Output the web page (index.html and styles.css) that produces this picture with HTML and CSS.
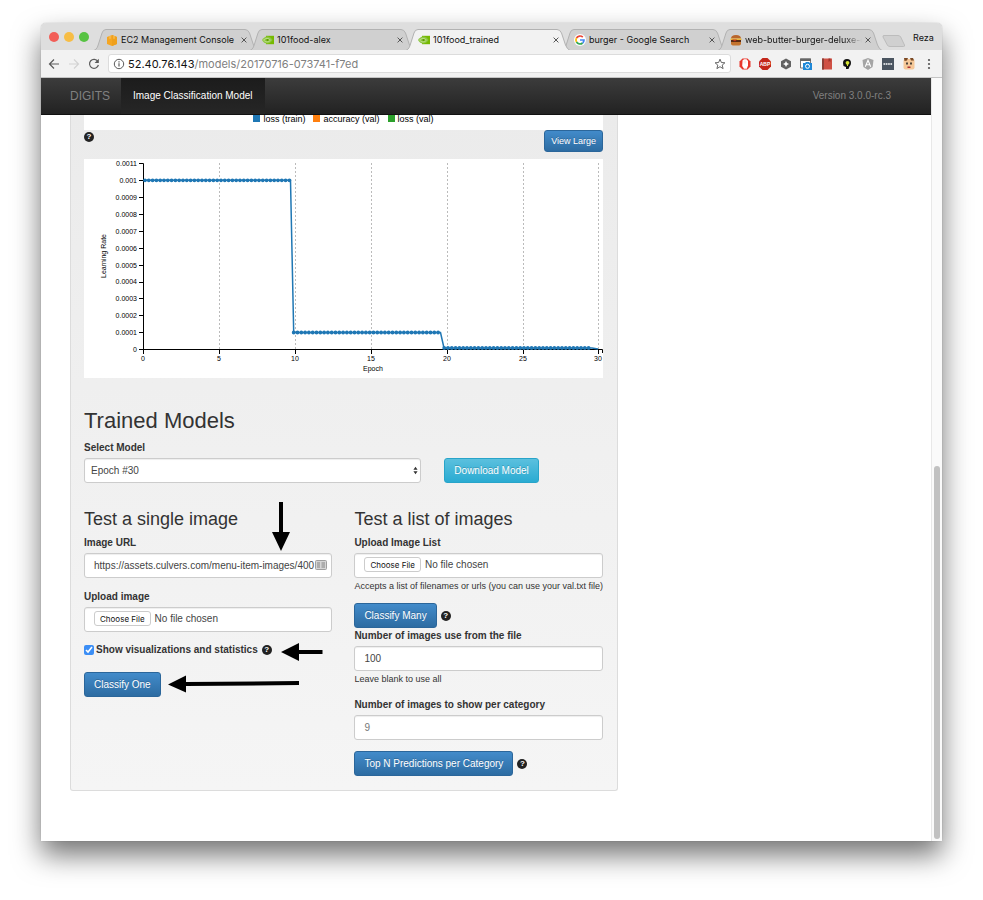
FILE: index.html
```html
<!DOCTYPE html>
<html lang="en">
<head>
<meta charset="utf-8">
<title>101food_trained</title>
<link rel="stylesheet" href="styles.css">
</head>
<body>
<svg class="defs" aria-hidden="true">
  <symbol id="tab-shape" viewBox="0 0 164 21" preserveAspectRatio="none">
    <path d="M0 21.500C3 20 3.500 18 4.500 15L8 4Q9 .5 12 .5H151Q154 .5 155.500 4L159.500 16Q161 20 164 21.500"/>
  </symbol>
  <symbol id="close" viewBox="0 0 6 6"><path d="M.6.6l4.800 4.800M5.400.6L.6 5.400" fill="none" stroke="#555" stroke-width="1"/></symbol>
  <symbol id="nvidia" viewBox="0 0 12 10">
    <path d="M4 .8H12V9.200H4z" fill="#76b900"/>
    <path d="M0 5Q2.500 1 6 1.500Q9.500 2.200 10.500 5Q8.500 8.500 5 8.500Q2 8.500 0 5z" fill="#8cc63f"/>
    <path d="M1.500 5Q4 2.600 6.500 3.600Q8 4.500 8.500 5.200Q7 7 5 7Q3 6.800 1.500 5z" fill="none" stroke="#cfe6a0" stroke-width=".7"/>
    <circle cx="5.500" cy="5" r="1.100" fill="#5d9800"/>
  </symbol>
</svg>
<div class="window">
  <header class="tabstrip">
    <div class="lights"><i class="red"></i><i class="yellow"></i><i class="green"></i></div>
    <nav class="tabs">
      <div class="tab">
        <svg class="shape"><use href="#tab-shape"/></svg>
        <svg class="fav" viewBox="0 0 12 12"><path d="M1 3L6 1l5 2v7L6 12 1 10z" fill="#f5a623"/><path d="M6 1l5 2v7L6 12z" fill="#efa01c"/><path d="M4 1.800v3M8 1.800v3" stroke="#fbc767" stroke-width="1"/></svg>
        <span class="title">EC2 Management Console</span>
        <button class="close" aria-label="Close tab"><svg><use href="#close"/></svg></button>
      </div>
      <div class="tab">
        <svg class="shape"><use href="#tab-shape"/></svg>
        <svg class="fav"><use href="#nvidia"/></svg>
        <span class="title">101food-alex</span>
        <button class="close" aria-label="Close tab"><svg><use href="#close"/></svg></button>
      </div>
      <div class="tab current">
        <svg class="shape"><use href="#tab-shape"/></svg>
        <svg class="fav"><use href="#nvidia"/></svg>
        <span class="title">101food_trained</span>
        <button class="close" aria-label="Close tab"><svg><use href="#close"/></svg></button>
      </div>
      <div class="tab">
        <svg class="shape"><use href="#tab-shape"/></svg>
        <svg class="fav" viewBox="0 0 12 12"><circle cx="6" cy="6" r="6" fill="#fff"/><g fill="none" stroke-width="1.700"><path d="M8.800 3.200A4 4 0 0 0 2.500 4" stroke="#ea4335"/><path d="M2.500 4A4 4 0 0 0 2.500 8" stroke="#fbbc05"/><path d="M2.500 8A4 4 0 0 0 8.600 9" stroke="#34a853"/><path d="M8.600 9A4 4 0 0 0 10 6H6" stroke="#4285f4"/></g></svg>
        <span class="title">burger - Google Search</span>
        <button class="close" aria-label="Close tab"><svg><use href="#close"/></svg></button>
      </div>
      <div class="tab">
        <svg class="shape"><use href="#tab-shape"/></svg>
        <svg class="fav" viewBox="0 0 12 12"><path d="M1 4.500Q1 1 6 1t5 3.500z" fill="#b9652b"/><path d="M.5 4.500h11v1.500H.5z" fill="#e9b93c"/><path d="M1 6h10v2H1z" fill="#5b2c14"/><path d="M1 8h10v1.500Q11 11.500 8 11.500H4Q1 11.500 1 9.500z" fill="#c4742f"/><path d="M2 5.500l3 2 2-2z" fill="#c5351f"/></svg>
        <span class="title fade">web-butter-burger-deluxe-c</span>
        <button class="close" aria-label="Close tab"><svg><use href="#close"/></svg></button>
      </div>
    </nav>
    <button class="newtab" aria-label="New tab"><svg viewBox="0 0 24 14"><path d="M2 1.500H16Q18 1.500 18.700 3L22.500 11Q23 12.500 21.500 12.500H8Q6 12.500 5.300 11L1 3Q.5 1.500 2 1.500z" fill="#d0d0d0" stroke="#b5b5b5" stroke-width=".8"/></svg></button>
    <span class="profile">Reza</span>
  </header>

  <div class="toolbar">
    <button class="tool" aria-label="Back"><svg viewBox="0 0 12 12"><path d="M11 6H1.800M6 1.500L1.500 6 6 10.500" fill="none" stroke="#5a5a5a" stroke-width="1.200"/></svg></button>
    <button class="tool" aria-label="Forward"><svg viewBox="0 0 12 12"><path d="M1 6h9.200M6 1.500L10.500 6 6 10.500" fill="none" stroke="#d2d2d2" stroke-width="1.200"/></svg></button>
    <button class="tool" aria-label="Reload"><svg viewBox="0 0 12 12"><path d="M9.800 3.300A4.500 4.500 0 1 0 10.400 7" fill="none" stroke="#5a5a5a" stroke-width="1.200"/><path d="M10.800.8v4.200H6.600z" fill="#5a5a5a"/></svg></button>
    <div class="omnibox">
      <svg viewBox="0 0 12 12"><circle cx="6" cy="6" r="4.700" fill="none" stroke="#5a5a5a"/><path d="M6 5.200v3.400M6 3.200v1.200" stroke="#5a5a5a" stroke-width="1.200"/></svg>
      <label for="address">52.40.76.143</label><input id="address" type="text" value="/models/20170716-073741-f7ed">
      <svg viewBox="0 0 12 12"><path d="M6 1.200l1.400 3.300 3.500.3-2.700 2.300.9 3.500L6 8.700l-3.100 1.900.9-3.500L1.100 4.800l3.500-.3z" fill="none" stroke="#555" stroke-width=".9"/></svg>
    </div>
    <div class="extensions">
      <svg viewBox="0 0 12 12"><path d="M3.500.5h5L11.500 3.500v5L8.500 11.500h-5L.5 8.500v-5z" fill="#e8372c"/><path d="M3.500 2.500L5 1.200h2.500L9 3v4.500L7.800 10.800H5L3.200 8z" fill="#fff"/><path d="M5.200 2.500v3M6.700 2.500v3" stroke="#f3b5b0" stroke-width=".4"/></svg>
      <svg viewBox="0 0 12 12"><path d="M3.500 0h5L12 3.500v5L8.500 12h-5L0 8.500v-5z" fill="#c3271b"/><text x="6" y="7.800" class="badge">ABP</text></svg>
      <svg viewBox="0 0 12 12"><path d="M6 .5l5 2.700v5.600L6 11.500 1 8.800V3.200z" fill="#626262"/><path d="M6 3l1 2 2 1-2 1-1 2-1-2-2-1 2-1z" fill="#fff"/></svg>
      <svg viewBox="0 0 12 12"><path d="M.5 1h10v9h-10z" fill="#fff" stroke="#777"/><path d="M0 .5h11V3H0z" fill="#666"/><path d="M3 5h2l1-1h3l1 1h2v7H3z" fill="#1e88d8"/><circle cx="7.500" cy="8.300" r="2" fill="none" stroke="#fff"/></svg>
      <svg viewBox="0 0 12 12"><path d="M1 .5h10v11H1z" fill="#cf5145"/><path d="M1 .5h2v11H1z" fill="#8d4038"/><path d="M7.500.5h2V4l-1-1-1 1z" fill="#a1352c"/></svg>
      <svg viewBox="0 0 12 12"><path d="M2 5a4 4 0 0 1 8 0q0 2-1.500 3.500L7.500 11H5V9L2.500 8z" fill="#111"/><circle cx="6.500" cy="4.800" r="1.900" fill="#d7e635"/><path d="M6 6h1v2H6z" fill="#d7e635"/></svg>
      <svg viewBox="0 0 12 12"><path d="M6 0l5.500 2-.9 7L6 12 1.400 9 .5 2z" fill="#a5a5a5"/><path d="M3.300 8.800L6 2.300l2.700 6.500M4.300 6.800h3.400" fill="none" stroke="#fff" stroke-width="1.100"/></svg>
      <svg viewBox="0 0 12 12"><path d="M0 0h12v12H0z" fill="#4b5560"/><path d="M1.500 6h9" stroke="#fff" stroke-width="1.500" stroke-dasharray="1.700 .6"/></svg>
      <svg viewBox="0 0 12 12"><rect x=".5" y="1" width="11" height="10.500" rx="2" fill="#f5c898"/><path d="M1 0h4L4 2.500 1.500 3zM7 0h3l1 2.500H8z" fill="#7b4a25"/><path d="M3.200 4.500h1.600v2H3.200zM7.200 4.500h1.600v2H7.200z" fill="#222"/><path d="M4.500 8.500h3v1.500h-3z" fill="#a33"/></svg>
      <svg viewBox="0 0 12 12"><g fill="#555"><circle cx="6" cy="2" r="1.100"/><circle cx="6" cy="6" r="1.100"/><circle cx="6" cy="10" r="1.100"/></g></svg>
    </div>
  </div>

  <div class="viewport">
    <div class="page">
      <nav class="navbar">
        <a class="brand" href="#">DIGITS</a>
        <a class="active" href="#">Image Classification Model</a>
        <span class="version">Version 3.0.0-rc.3</span>
      </nav>
      <main class="content">
        <section class="well">
          <div class="legend">
            <span class="blue">loss (train)</span><span class="orange">accuracy (val)</span><span class="leaf">loss (val)</span>
          </div>
          <div class="chart-head">
            <span class="help">?</span>
            <button class="btn primary small">View Large</button>
          </div>
          <svg class="chart" viewBox="0 0 519 219" role="img" aria-label="Learning rate by epoch">
            <g class="grid"><path d="M135.500 4V190M211.500 4V190M287.500 4V190M363.500 4V190M439.500 4V190M514.500 4V190"/></g>
            <g class="axis"><path d="M55 4.500H59.500V190.500H518.500V194M55 21.500h4M55 38.500h4M55 55.500h4M55 72.500h4M55 89.500h4M55 106.500h4M55 123.500h4M55 139.500h4M55 156.500h4M55 173.500h4M55 190.500h4M59.500 190v5M135.500 190v5M211.500 190v5M287.500 190v5M363.500 190v5M439.500 190v5M514.500 190v5"/></g>
            <g class="ylabels">
              <text x="53" y="7">0.0011</text><text x="53" y="24">0.001</text><text x="53" y="41">0.0009</text><text x="53" y="58">0.0008</text><text x="53" y="75">0.0007</text><text x="53" y="92">0.0006</text><text x="53" y="109">0.0005</text><text x="53" y="125">0.0004</text><text x="53" y="142">0.0003</text><text x="53" y="159">0.0002</text><text x="53" y="176">0.0001</text><text x="53" y="193">0</text>
            </g>
            <g class="xlabels">
              <text x="59" y="202">0</text><text x="135" y="202">5</text><text x="211" y="202">10</text><text x="287" y="202">15</text><text x="363" y="202">20</text><text x="439" y="202">25</text><text x="514" y="202">30</text>
              <text x="289" y="212">Epoch</text>
              <text transform="translate(22 97) rotate(-90)">Learning Rate</text>
            </g>
            <path class="line" d="M59.500 21.300H206.500L209.700 173.500H356.500L360 189H508L514 190"/>
            <path class="dots" d="M61 21.300H206.700M209.700 173.500H356.700M360.200 189H508"/>
          </svg>

          <h2>Trained Models</h2>
          <label for="model">Select Model</label>
          <div class="model-row">
            <div class="select">
              <select id="model" class="control"><option>Epoch #30</option></select>
              <svg viewBox="0 0 6 9"><path d="M3 0l2.500 3.700H.5zM3 9L.5 5.300h5z" fill="#333"/></svg>
            </div>
            <button class="btn info">Download Model</button>
          </div>

          <div class="tests">
            <form>
              <h3>Test a single image</h3>
              <div class="anchor">
                <label for="url">Image URL</label>
                <input id="url" class="control" type="text" value="https://assets.culvers.com/menu-item-images/400">
                <svg class="card" viewBox="0 0 12 10"><rect x=".5" y=".5" width="11" height="9" rx="1" fill="#ccc" stroke="#888"/><path d="M2 3h3M2 5h3M2 7h3M6.500 3h3.500M6.500 5h3.500M6.500 7h3.500" stroke="#666"/></svg>
                <svg class="arrow down" viewBox="0 0 18 49"><path d="M7 0h4v30h7L9 49 0 30h7z"/></svg>
              </div>
              <div class="field">
                <label for="image">Upload image</label>
                <input id="image" class="control" type="file">
              </div>
              <div class="check anchor">
                <input id="show" type="checkbox" checked>
                <label for="show">Show visualizations and statistics</label>
                <span class="help">?</span>
                <svg class="arrow show" viewBox="0 0 42 18"><path d="M0 9L18 0v7h23.500v4H18v7z"/></svg>
              </div>
              <div class="anchor">
                <button type="button" class="btn primary">Classify One</button>
                <svg class="arrow classify" viewBox="0 0 132 18"><path d="M0 9.500L18 .5v6.500L131 6v4L18 11v6.500z"/></svg>
              </div>
            </form>
            <form>
              <h3>Test a list of images</h3>
              <label for="list">Upload Image List</label>
              <input id="list" class="control" type="file">
              <small>Accepts a list of filenames or urls (you can use your val.txt file)</small>
              <div class="action after-note">
                <button type="button" class="btn primary">Classify Many</button><span class="help">?</span>
              </div>
              <label for="count">Number of images use from the file</label>
              <input id="count" class="control" type="text" value="100">
              <small>Leave blank to use all</small>
              <div class="field">
                <label for="per">Number of images to show per category</label>
                <input id="per" class="control faint" type="text" value="9">
              </div>
              <div class="action after-field">
                <button type="button" class="btn primary">Top N Predictions per Category</button><span class="help">?</span>
              </div>
            </form>
          </div>
        </section>
      </main>
    </div>
    <div class="scrollbar"><i></i></div>
  </div>
</div>
</body>
</html>
```

FILE: styles.css
```css
* { box-sizing: border-box; }

body {
  margin: 0;
  padding: 23px 41px 59px;
  background: #fff;
  color: #333;
  font: 10px/14px "Liberation Sans", sans-serif;
}

button { border: 0; padding: 0; background: none; font: inherit; }
a { text-decoration: none; }
.defs { position: absolute; width: 0; height: 0; }

.window {
  border-radius: 5px 5px 2px 2px;
  box-shadow: 0 14px 28px rgba(0, 0, 0, .55), 0 0 1px rgba(0, 0, 0, .4);
}

/* Tab strip */
.tabstrip {
  display: flex;
  align-items: flex-end;
  height: 27px;
  border-radius: 5px 5px 0 0;
  background: #dedede;
  color: #111;
  font: 9px/12px Inter, sans-serif;
}
.lights { display: flex; gap: 5px; width: 53px; padding: 0 0 8px 8px; }
.lights i { width: 10px; height: 10px; border-radius: 50%; }
.red { background: #f25e57; }
.yellow { background: #f7bd45; }
.green { background: #57c343; }

.tabs { display: flex; flex: 1; min-width: 0; }
.tab {
  position: relative;
  display: flex;
  align-items: center;
  flex: 1;
  min-width: 0;
  height: 21px;
  margin-right: -8px;
  padding: 0 8px 0 12px;
}
.tab:last-child { margin-right: 0; }
.shape { position: absolute; inset: 0; width: 100%; height: 100%; fill: #d0d0d0; stroke: #b2b2b2; }
.tab.current { z-index: 1; }
.current .shape { fill: #f2f2f2; }
.fav { position: relative; flex: none; width: 12px; height: 12px; margin-right: 3px; }
.title { position: relative; flex: 1; min-width: 0; overflow: hidden; white-space: nowrap; }
.fade { mask-image: linear-gradient(90deg, #000 85%, transparent); }
.close { position: relative; display: flex; padding: 3px; }
.close svg { width: 6px; height: 6px; }
.newtab { width: 24px; height: 14px; margin-bottom: 2px; }
.newtab svg { display: block; width: 24px; height: 14px; }
.profile { width: 36px; padding: 0 0 6px 7px; }

/* Toolbar */
.toolbar {
  display: flex;
  align-items: center;
  height: 28px;
  padding: 0 7px;
  border-bottom: 1px solid #c4c4c4;
  background: #f2f2f2;
}
.tool { width: 12px; height: 12px; margin-right: 8px; }
.tool svg { display: block; }
.omnibox {
  display: flex;
  align-items: center;
  flex: 1;
  height: 19px;
  padding: 0 4px;
  border: 1px solid #dcdcdc;
  border-radius: 3px;
  background: #fff;
  font: 11px/16px Inter, sans-serif;
  color: #111;
}
.omnibox svg { flex: none; width: 12px; height: 12px; }
.omnibox label { margin: 0 0 0 3px; font-weight: 400; line-height: 16px; }
.omnibox input { flex: 1; min-width: 0; border: 0; padding: 0; background: none; color: #808080; font: inherit; }
.extensions { display: flex; justify-content: space-between; width: 204px; padding-left: 8px; }
.extensions svg { width: 12px; height: 12px; }
.badge { fill: #fff; font: bold 5px "Liberation Sans", sans-serif; text-anchor: middle; }

/* Page */
.viewport { display: flex; }
.page { flex: 1; min-width: 0; padding-bottom: 50px; background: #fff; }
.scrollbar {
  display: flex;
  align-items: flex-end;
  justify-content: center;
  width: 11px;
  padding-bottom: 2px;
  border-left: 1px solid #e8e8e8;
  background: #fafafa;
}
.scrollbar i { width: 6px; height: 49%; border-radius: 3px; background: #c1c1c1; }

.navbar {
  display: flex;
  align-items: center;
  height: 37px;
  padding: 0 40px 0 29px;
  border-bottom: 1px solid #111;
  background: linear-gradient(#3c3c3c, #222);
}
.brand { margin-right: 11px; color: #808080; font-size: 12px; }
.active {
  padding: 0 12px;
  background: linear-gradient(#1c1c1c, #262626);
  color: #fff;
  line-height: 36px;
}
.version { margin-left: auto; color: #808080; }

.content { display: grid; grid-template-columns: 2fr 1fr; padding: 0 39px 0 29px; }
.well {
  padding: 0 14px 14px 13px;
  border: 1px solid #dcdcdc;
  border-top: 0;
  border-radius: 0 0 3px 3px;
  background: linear-gradient(#ebebeb, #f5f5f5);
}

.legend {
  display: flex;
  justify-content: center;
  gap: 8px;
  height: 15px;
  background: #fff;
  color: #000;
  font-size: 9px;
  line-height: 9px;
}
.legend span::before { content: ""; display: inline-block; width: 7px; height: 7px; margin-right: 3px; }
.blue::before { background: #1f77b4; }
.orange::before { background: #ff7f0e; }
.leaf::before { background: #2ca02c; }

.chart-head { display: flex; align-items: flex-start; justify-content: space-between; height: 29px; }
.chart-head .help { margin: 2px 0 0; }

.help {
  display: inline-block;
  flex: none;
  width: 10px;
  height: 10px;
  border-radius: 50%;
  background: #222;
  color: #fff;
  font-size: 8px;
  font-weight: bold;
  line-height: 10px;
  text-align: center;
}

.chart { display: block; width: 100%; background: #fff; }
.chart text { font-size: 7px; fill: #000; }
.grid path { fill: none; stroke: #bbb; stroke-dasharray: 2 2; }
.axis path { fill: none; stroke: #000; }
.ylabels { text-anchor: end; }
.xlabels { text-anchor: middle; }
.line { fill: none; stroke: #1f77b4; stroke-width: 1.5; }
.dots { fill: none; stroke: #1f77b4; stroke-width: 3.8; stroke-linecap: round; stroke-dasharray: 0 3.8; }

h2, h3 { font-weight: 400; }
h2 { margin: 30px 0 6px; font-size: 22px; line-height: 26px; }
h3 { margin: 0 0 5px; font-size: 18px; line-height: 22px; }
label { display: block; margin-bottom: 2px; font-weight: bold; line-height: 16px; }
small { display: block; margin-top: 1px; font-size: 9px; line-height: 14px; white-space: nowrap; }

.control {
  display: block;
  width: 100%;
  height: 25px;
  padding: 0 9px;
  border: 1px solid #ccc;
  border-radius: 3px;
  background: #fff;
  color: #444;
  font: 10px/14px "Liberation Sans", sans-serif;
  box-shadow: inset 0 1px 1px rgba(0, 0, 0, .07);
}
.faint { color: #777; }
select.control { appearance: none; padding: 0 6px; }
input[type="file"] { padding: 3px 9px; }
input[type="file"]::file-selector-button {
  height: 15px;
  margin: 0 4px 0 0;
  padding: 0 5px;
  border: 1px solid #ccc;
  border-radius: 3px;
  background: #fff;
  color: #111;
  font: 8px/12px Inter, sans-serif;
}

.model-row { display: flex; gap: 23px; }
.select { position: relative; flex: 0 0 65%; }
.select svg { position: absolute; right: 3px; top: 8px; width: 5px; height: 9px; }

.btn {
  height: 25px;
  padding: 0 9px;
  border: 1px solid;
  border-radius: 3px;
  color: #fff;
  text-shadow: 0 -1px 0 rgba(0, 0, 0, .2);
  white-space: nowrap;
}
.primary { border-color: #2b669a; background: linear-gradient(#428bca, #2d6ca2); }
.info { border-color: #28a4c9; background: linear-gradient(#5bc0de, #2aabd2); }
.small { height: 22px; padding: 0 6px; font-size: 9px; }

.tests { display: grid; grid-template-columns: 1fr 1fr; gap: 22px; margin-top: 25px; }
.field { margin-top: 11px; }
.anchor { position: relative; }
.check { display: flex; align-items: center; height: 14px; margin: 11px 0 15px; }
.check input { width: 10px; height: 10px; margin: 0 2px 0 0; accent-color: #3b8ef5; }
.check label { margin: 0 4px 0 0; }
.action { display: flex; align-items: center; gap: 4px; }
.after-note { margin-top: 10px; }
.after-field { margin-top: 11px; }

/* Annotations over the form */
.card { position: absolute; right: 5px; bottom: 8px; width: 12px; height: 10px; opacity: .8; }
.arrow { position: absolute; fill: #000; }
.down { left: 188px; bottom: 27px; width: 18px; height: 49px; }
.show { left: 197px; top: 0; width: 42px; height: 18px; }
.classify { left: 84px; top: 3px; width: 132px; height: 18px; }
```
